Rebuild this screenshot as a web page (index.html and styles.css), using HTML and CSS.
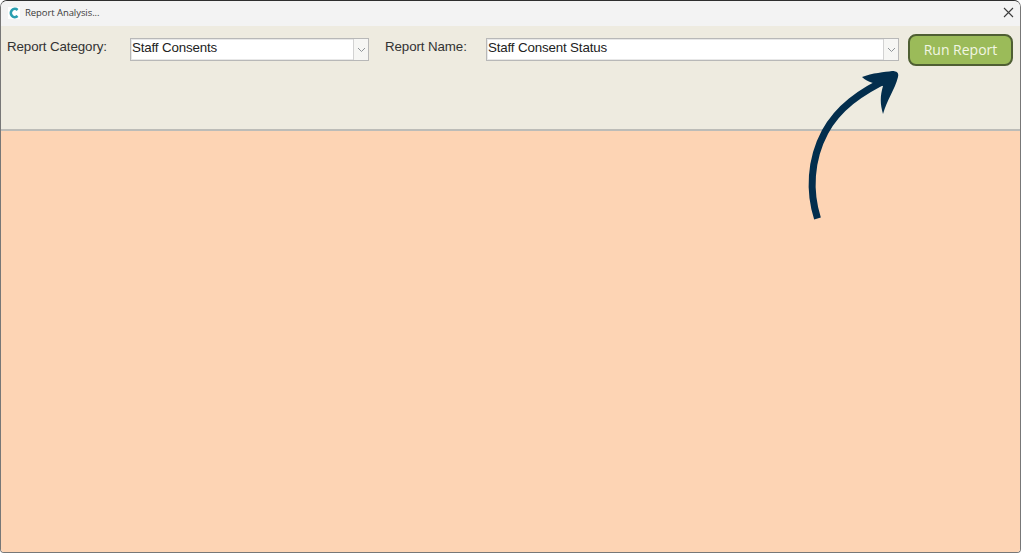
FILE: index.html
```html
<!DOCTYPE html>
<html lang="en">
<head>
<meta charset="utf-8">
<title>Report Analysis...</title>
<link rel="stylesheet" href="styles.css">
</head>
<body>
<div class="window">
  <header class="titlebar">
    <div class="title-left">
      <span class="app-icon">
        <svg width="12" height="12" viewBox="0 0 12 12"><path d="M9.6 2.9A4.1 4.1 0 1 0 9.6 9.1" fill="none" stroke="#2a9fb0" stroke-width="2.6"/></svg>
      </span>
      <span class="title-text">Report Analysis...</span>
    </div>
    <svg class="close" width="11" height="11" viewBox="0 0 11 11"><path d="M1 1L10 10M10 1L1 10" stroke="#3c3c3c" stroke-width="1.1" fill="none"/></svg>
  </header>
  <section class="toolbar">
    <span class="label label-cat">Report Category:</span>
    <div class="combo combo-cat">
      <span class="combo-text">Staff Consents</span>
      <span class="combo-btn"><svg width="9" height="6" viewBox="0 0 9 6"><path d="M1 1L4.5 4.5L8 1" fill="none" stroke="#8f9498" stroke-width="1"/></svg></span>
    </div>
    <span class="label label-name">Report Name:</span>
    <div class="combo combo-name">
      <span class="combo-text">Staff Consent Status</span>
      <span class="combo-btn"><svg width="9" height="6" viewBox="0 0 9 6"><path d="M1 1L4.5 4.5L8 1" fill="none" stroke="#8f9498" stroke-width="1"/></svg></span>
    </div>
    <button class="run">Run Report</button>
  </section>
  <main class="content"></main>
</div>
<svg class="arrow" width="110" height="160" viewBox="800 65 110 160">
  <path d="M817.500 218.500C809 192 810 160 825 132C838 108 860 92 890 78" fill="none" stroke="#032e4d" stroke-width="7"/>
  <path d="M862 77C872 73 885 72 892 71C897 71 899 73 898 77C895 89 887 100 883 114C880 104 880 96 883 86C876 83 868 83 862 77Z" fill="#032e4d"/>
</svg>
</body>
</html>
```
FILE: styles.css
```css
html, body {
  margin: 0;
  padding: 0;
  background: #ffffff;
}
body {
  width: 1024px;
  height: 556px;
  overflow: hidden;
  position: relative;
  font-family: "Liberation Sans", Arial, sans-serif;
}
.window {
  width: 1021px;
  height: 553px;
  box-sizing: border-box;
  border: 1px solid #777777;
  border-top-color: #2e2e2e;
  border-radius: 7px 7px 4px 4px;
  overflow: hidden;
  display: flex;
  flex-direction: column;
}
.titlebar {
  height: 25px;
  flex: none;
  box-sizing: border-box;
  background: #f3f3f3;
  display: flex;
  align-items: center;
  justify-content: space-between;
  padding: 0 6px 2px 7px;
}
.title-left {
  display: flex;
  align-items: center;
  gap: 5px;
}
.app-icon {
  width: 12px;
  height: 12px;
  background: #ffffff;
  display: flex;
}
.title-text {
  font-family: "Open Sans", sans-serif;
  font-size: 9.500px;
  color: #3a3a3a;
  letter-spacing: -0.07px;
}
.toolbar {
  height: 105px;
  flex: none;
  box-sizing: border-box;
  background: #eeebe0;
  border-bottom: 2px solid #bcbcb8;
  display: flex;
  align-items: flex-start;
  padding: 8px 6px 0 6px;
}
.label {
  font-size: 13.330px;
  color: #333333;
  line-height: 24px;
  letter-spacing: -0.1px;
  padding-top: 1px;
}
.label-cat {
  width: 123px;
  flex: none;
}
.label-name {
  width: 101px;
  flex: none;
  margin-left: 16px;
}
.combo {
  height: 23px;
  box-sizing: border-box;
  margin-top: 4px;
  background: #ffffff;
  border: 1px solid #b8b8b8;
  box-shadow: inset 0 0 0 1px #e8e8e8;
  display: flex;
  align-items: stretch;
  justify-content: space-between;
  flex: none;
}
.combo-cat {
  width: 239px;
}
.combo-name {
  width: 413px;
}
.combo-text {
  font-size: 13.330px;
  line-height: 18px;
  color: #222222;
  padding-left: 1px;
  letter-spacing: -0.15px;
}
.combo-btn {
  width: 14px;
  background: #f6f6f4;
  border-left: 1px solid #d2d2d2;
  display: flex;
  align-items: center;
  justify-content: center;
}
.run {
  width: 105px;
  height: 32px;
  flex: none;
  box-sizing: border-box;
  margin: 0 0 0 9px;
  background: #9bbb59;
  border: 2px solid #4f5f33;
  border-radius: 8px;
  color: #f2f6e4;
  font-family: "Open Sans", sans-serif;
  font-size: 14px;
  padding: 0 0 2px 0;
}
.content {
  flex: 1;
  background: #fdd4b4;
}
.arrow {
  position: absolute;
  left: 800px;
  top: 65px;
}
```
